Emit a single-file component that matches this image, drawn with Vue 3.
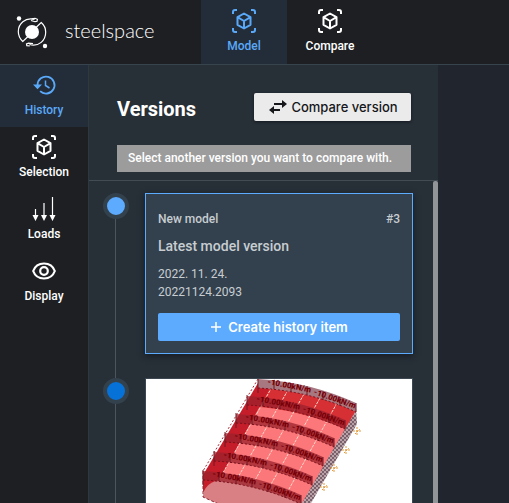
<script setup>
import { ref } from 'vue'

const mainTabs = ['Model', 'Compare']
const tools = ['History', 'Selection', 'Loads', 'Display']
const activeTab = ref('Model')
const activeTool = ref('History')

// Load strips of the rendered slab, front edge moves down and left
const strips = [
  { x: 112, y: 0 },
  { x: 101, y: 17 },
  { x: 90, y: 35 },
  { x: 79, y: 54 },
  { x: 68, y: 73 },
  { x: 57, y: 92 }
]
const supports = [[211, 52], [200, 71], [188, 89], [178, 108]]
</script>

<template>
  <div class="app">
    <header class="topbar">
      <a class="brand" href="#">
        <svg class="logo" viewBox="0 0 34 34" aria-hidden="true">
          <circle cx="17" cy="17" r="7" fill="#fff" />
          <circle cx="4" cy="3.500" r="2.200" fill="#fff" />
          <circle cx="30" cy="31" r="2.200" fill="#fff" />
          <g fill="none" stroke="#fff" stroke-width="1.200">
            <path d="M19.500 4.500C10 2 3.300 9 3.300 16.500c0 4 1.600 7.300 4.500 10L13 21.500" />
            <path d="M14.500 29.500c9.500 2.500 16.200-4 16.200-12.500 0-4-1.600-7-4.500-9.500L21 12.500" />
            <path d="M16 5.500l4 1.200 2-.4.400-2-2.400-1-3.500.5" />
            <path d="M18 28.700l-4.500-.6-2 .8.300 1.800 3 .2" />
          </g>
        </svg>
        <span>steelspace</span>
      </a>
      <nav class="tabs">
        <button v-for="tab in mainTabs" :key="tab" class="nav-item" :class="{ active: tab === activeTab }" @click="activeTab = tab">
          <svg class="icon" viewBox="0 0 26 26" aria-hidden="true">
            <g fill="none" stroke="currentColor" stroke-width="2" stroke-linejoin="round">
              <path d="M2 6V4q0-2 2-2h2M20 2h2q2 0 2 2v2M24 20v2q0 2-2 2h-2M6 24H4q-2 0-2-2v-2" />
              <path d="M13 5.500l6.500 3.700v7.600L13 20.500l-6.500-3.700V9.200zM6.500 9.200L13 13l6.500-3.800M13 13v7.500" />
            </g>
          </svg>
          <span>{{ tab }}</span>
        </button>
      </nav>
    </header>

    <div class="body">
      <nav class="sidebar">
        <button v-for="tool in tools" :key="tool" class="nav-item" :class="{ active: tool === activeTool }" @click="activeTool = tool">
          <svg v-if="tool === 'History'" class="icon" viewBox="0 0 26 26" aria-hidden="true">
            <path d="M6.500 13a8.500 8.500 0 1 1 2.600 6.200" fill="none" stroke="currentColor" stroke-width="1.800" />
            <path d="M2 12.500h9l-4.500 4.800z" fill="currentColor" />
            <path d="M14.500 8.500v5l4 2.500" fill="none" stroke="currentColor" stroke-width="1.500" />
          </svg>
          <svg v-else-if="tool === 'Selection'" class="icon" viewBox="0 0 26 26" aria-hidden="true">
            <g fill="none" stroke="currentColor" stroke-width="2" stroke-linejoin="round">
              <path d="M2 6V4q0-2 2-2h2M20 2h2q2 0 2 2v2M24 20v2q0 2-2 2h-2M6 24H4q-2 0-2-2v-2" />
              <path d="M13 5.500l6.500 3.700v7.600L13 20.500l-6.500-3.700V9.200zM6.500 9.200L13 13l6.500-3.800M13 13v7.500" />
            </g>
          </svg>
          <svg v-else-if="tool === 'Loads'" class="icon" viewBox="0 0 26 26" aria-hidden="true">
            <path d="M4.500 13v9M13 7v15M21.500 1v21" stroke="currentColor" stroke-width="1.200" />
            <path d="M1.500 19h6L4.500 25zM10 19h6l-3 6zM18.500 19h6l-3 6z" fill="currentColor" />
          </svg>
          <svg v-else class="icon" viewBox="0 0 26 26" aria-hidden="true">
            <path d="M2.200 13C4 8 8 5.500 13 5.500S22 8 23.800 13C22 18 18 20.500 13 20.500S4 18 2.200 13z" fill="none" stroke="currentColor" stroke-width="2.200" />
            <circle cx="13" cy="13" r="3.800" fill="none" stroke="currentColor" stroke-width="2.200" />
          </svg>
          <span>{{ tool }}</span>
        </button>
      </nav>

      <aside class="panel">
        <div class="panel-head">
          <div class="title-row">
            <h1>Versions</h1>
            <button class="compare">
              <svg viewBox="0 0 18 14" aria-hidden="true">
                <path d="M5 4h9M4 10h7" stroke="currentColor" stroke-width="2" />
                <path d="M13 0l5 4-5 4zM5 6L0 10l5 4z" fill="currentColor" />
              </svg>
              <span>Compare version</span>
            </button>
          </div>
          <p class="hint">Select another version you want to compare with.</p>
        </div>

        <div class="scroll">
          <ol class="timeline">
            <li class="entry">
              <span class="dot light"></span>
              <article class="card current">
                <div class="meta"><span>New model</span><span>#3</span></div>
                <h2>Latest model version</h2>
                <p>2022. 11. 24.<br />20221124.2093</p>
                <button class="create">
                  <svg viewBox="0 0 12 12" aria-hidden="true"><path d="M6 1v10M1 6h10" stroke="currentColor" stroke-width="1.500" /></svg>
                  <span>Create history item</span>
                </button>
              </article>
            </li>
            <li class="entry">
              <span class="dot"></span>
              <article class="card preview">
                <svg viewBox="0 0 266 160" role="img" aria-label="Model loads">
                  <defs>
                    <pattern id="mesh" width="4" height="4" patternUnits="userSpaceOnUse">
                      <rect width="4" height="4" fill="#b9a3a8" />
                      <path d="M0 0h2v2H0zM2 2h2v2H2z" fill="#79606a" />
                    </pattern>
                  </defs>
                  <path d="M210 29l1 16-54 93-12 6 2-22z" fill="url(#mesh)" />
                  <path d="M112 6Q166 12 210 31L156 124Q112 100 57 103z" fill="#fb7779" />
                  <path d="M112 6Q166 12 210 31l-11 19Q154 30 101 27z" fill="#d62f34" />
                  <path d="M112 4l13 3-54 98-14 8V96z" fill="#c51e2a" />
                  <path d="M126 8L70 106M142 11L87 107M158 15L104 110M174 19L120 114M191 24L138 119" stroke="#ffd5c8" stroke-width="1" stroke-dasharray="3 1" />
                  <path d="M57 116Q60 98 92 100Q130 104 156 124l-5 36L57 118z" fill="#d98084" />
                  <g v-for="(s, i) in strips" :key="i" :transform="`translate(${s.x} ${s.y})`">
                    <path d="M0 0Q52 3 98 24v9Q52 12 0 9z" :fill="i === 0 ? '#a77880' : '#99212c'" :fill-opacity="i === 0 ? 1 : 0.75" />
                    <path d="M0 -1v15M16 1v9M33 4v9M49 7v9M65 12v9M82 18v9M98 24v9" stroke="#6f1823" stroke-width="1" />
                    <path d="M0 9Q52 12 98 33" fill="none" stroke="#79101a" stroke-dasharray="2 2" />
                    <text class="load" transform="translate(9 5) rotate(11)">-10.00kN/m</text>
                    <text class="load" transform="translate(55 15) rotate(19)">-10.00kN/m</text>
                  </g>
                  <path d="M57 92v26l90 40" fill="none" stroke="#8c2733" stroke-dasharray="3 2" />
                  <path d="M112 0L57 92" stroke="#a52d35" stroke-dasharray="2 2" />
                  <path v-for="(p, i) in supports" :key="`p${i}`" :d="`M${p[0]} ${p[1] - 4}v8M${p[0] - 4} ${p[1]}h8M${p[0] - 2} ${p[1] + 3}l5-5`" stroke="#e49a3c" stroke-dasharray="2 1" />
                </svg>
              </article>
            </li>
          </ol>
          <div class="thumb"></div>
        </div>
      </aside>
      <main class="canvas"></main>
    </div>
  </div>
</template>

<style>
body {
  margin: 0;
  background: #20252e;
}
</style>

<style scoped>
.app {
  display: flex;
  flex-direction: column;
  height: 100vh;
  overflow: hidden;
  background: #20252e;
  color: #fff;
  font-family: Roboto, "Liberation Sans", sans-serif;
}
button {
  border: 0;
  margin: 0;
  padding: 0;
  font: inherit;
  cursor: pointer;
}
.topbar {
  display: flex;
  flex: none;
  height: 64px;
  background: #1d1f23;
  border-bottom: 1px solid #37434d;
}
.brand {
  display: flex;
  align-items: center;
  box-sizing: border-box;
  width: 201px;
  padding-left: 15px;
  gap: 16px;
  color: #fff;
  text-decoration: none;
  font: 300 20px/24px Lato, sans-serif;
}
.brand span {
  padding-bottom: 4px;
}
.logo {
  width: 34px;
  height: 34px;
}
.tabs {
  display: flex;
}
.nav-item {
  display: flex;
  flex-direction: column;
  align-items: center;
  gap: 4px;
  box-sizing: border-box;
  height: 62px;
  padding-top: 7px;
  background: transparent;
  color: #fff;
  font-size: 12px;
  line-height: 16px;
  font-weight: 500;
}
.tabs .nav-item {
  width: 86px;
  height: 64px;
  padding-top: 8px;
}
.nav-item.active {
  background: #232d3a;
  color: #5aa9f8;
}
.icon {
  width: 26px;
  height: 26px;
}
.body {
  display: flex;
  flex: 1;
  min-height: 0;
}
.sidebar {
  display: flex;
  flex-direction: column;
  flex: none;
  width: 88px;
  background: #1d1f23;
  border-right: 1px solid #2f3841;
}
.panel {
  display: flex;
  flex-direction: column;
  flex: 0 1 349px;
  min-height: 0;
  background: #272f37;
}
.panel-head {
  padding: 28px 27px 8px 28px;
  border-bottom: 1px solid #424c55;
}
.title-row {
  display: flex;
  align-items: center;
  justify-content: space-between;
}
h1 {
  margin: 0;
  padding-top: 4px;
  font-size: 20px;
  line-height: 24px;
  font-weight: 700;
}
.compare {
  display: flex;
  align-items: center;
  justify-content: center;
  gap: 4px;
  height: 28px;
  width: 157px;
  padding-left: 2px;
  border-radius: 2px;
  background: #ebebeb;
  color: #15171a;
  font: 500 13px/16px Inter, sans-serif;
  box-shadow: 0 1px 3px #15191f;
}
.compare svg {
  width: 18px;
  height: 14px;
}
.hint {
  margin: 24px 0 0;
  padding: 5px 11px 6px;
  background: #9c9c9c;
  font-size: 12px;
  line-height: 16px;
  font-weight: 500;
  white-space: nowrap;
}
.scroll {
  display: flex;
  flex: 1;
  min-height: 0;
  overflow: hidden;
}
.timeline {
  flex: 1;
  margin: 0;
  padding: 12px 20px 0 14px;
  list-style: none;
}
.entry {
  display: flex;
  position: relative;
  gap: 16px;
  padding-bottom: 24px;
}
.entry::before {
  content: "";
  position: absolute;
  top: 12px;
  bottom: -12px;
  left: 12px;
  width: 1px;
  background: #4a555e;
}
.dot {
  position: relative;
  box-sizing: border-box;
  flex: none;
  width: 26px;
  height: 26px;
  border: 4px solid #33414d;
  border-radius: 50%;
  background: #0672d8;
}
.dot.light {
  background: #5cabff;
}
.card {
  box-sizing: border-box;
  flex: 1;
  min-width: 0;
  border: 1px solid #3c4751;
  background: #33414e;
  color: #c8cdd1;
}
.card.current {
  padding: 17px 12px 12px;
  border-color: #5cabff;
  box-shadow: 0 2px 6px #171c22;
}
.meta {
  display: flex;
  justify-content: space-between;
  font-size: 12px;
  line-height: 16px;
  font-weight: 500;
}
h2 {
  margin: 10px 0;
  font-size: 14px;
  line-height: 18px;
  font-weight: 500;
}
.current p {
  margin: 0 0 12px;
  font-size: 12px;
  line-height: 18px;
}
.create {
  display: flex;
  align-items: center;
  justify-content: center;
  gap: 6px;
  width: 100%;
  height: 28px;
  border-radius: 2px;
  background: #5cabff;
  color: #fff;
  font: 600 13px/16px Inter, sans-serif;
}
.create svg {
  width: 12px;
  height: 12px;
}
.preview {
  background: #fff;
}
.preview svg {
  display: block;
  width: 100%;
}
.load {
  fill: #780008;
  font: 900 8px Roboto, sans-serif;
}
.thumb {
  flex: none;
  width: 5px;
  border-radius: 2px 2px 0 0;
  background: #929597;
}
.canvas {
  flex: 1;
}
</style>
